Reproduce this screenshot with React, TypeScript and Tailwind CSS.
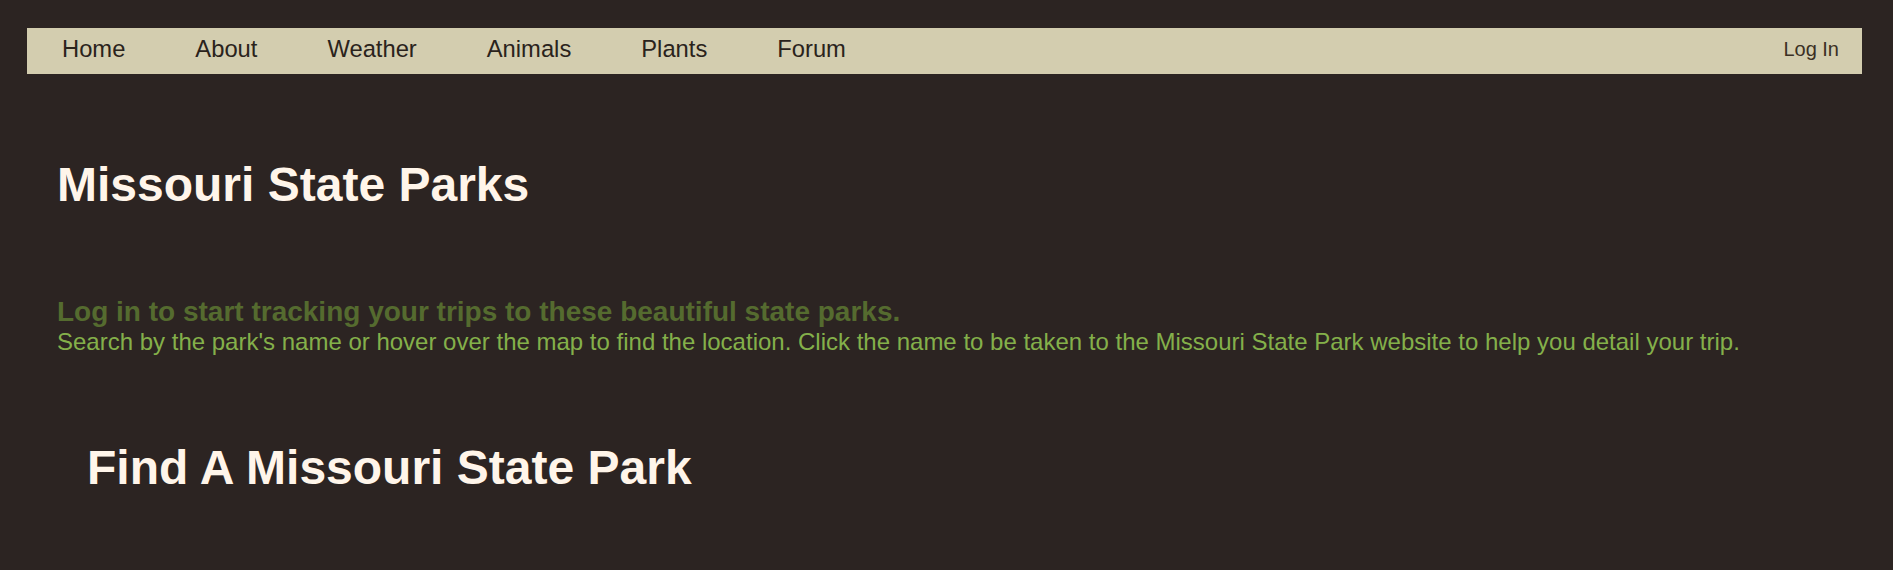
const links = ["Home", "About", "Weather", "Animals", "Plants", "Forum"];

export default function App() {
  return (
    <div className="min-h-[570px] bg-[#2c2422] pt-[28px] pl-[27px] pr-[31px] font-['Liberation_Sans',Arial,sans-serif]">
      <nav className="flex h-[46px] items-start justify-between bg-[#d3cdaf]">
        <ul className="flex pt-[3px]">
          {links.map((l) => (
            <li key={l}>
              <a href="#" className="block px-[35px] text-[23.75px] text-[#2a231c]">
                {l}
              </a>
            </li>
          ))}
        </ul>
        <a href="#" className="mr-[23px] mt-[6px] text-[20px] text-[#3b3024]">
          Log In
        </a>
      </nav>

      <div className="pl-[30px]">
        <h1 className="mt-[83px] text-[48px] font-bold leading-[1.15] text-[#fff5ea]">
          Missouri State Parks
        </h1>
        <h3 className="mt-[84px] text-[28px] font-bold leading-[1.15] text-[#556b2f]">
          Log in to start tracking your trips to these beautiful state parks.
        </h3>
        <p className="text-[24px] leading-[1.15] text-[#84b04a]">
          Search by the park's name or hover over the map to find the location. Click the name to be taken to the Missouri State Park website to help you detail your trip.
        </p>
        <h2 className="ml-[30px] mt-[84px] text-[48px] font-bold leading-[1.15] text-[#fff5ea]">
          Find A Missouri State Park
        </h2>
      </div>
    </div>
  );
}
